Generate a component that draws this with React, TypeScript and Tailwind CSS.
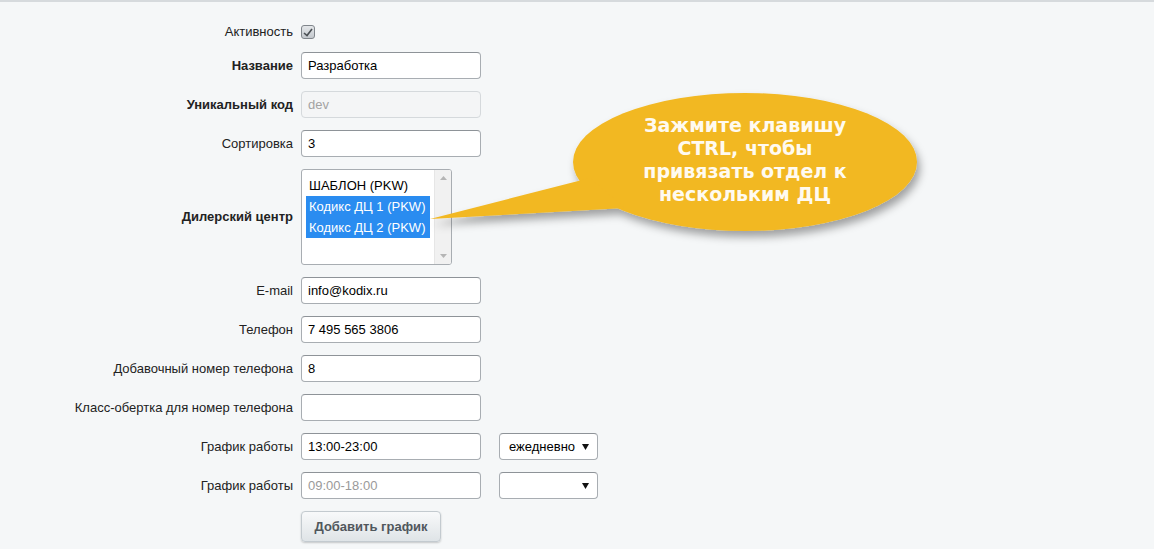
import React from 'react';

const labelCls = 'w-[293px] shrink-0 text-right text-[13px] text-[#222]';
const inputCls =
  'ml-2 h-[27px] w-[180px] rounded-[4px] border border-[#a8adb2] border-t-[#8e9398] bg-white px-[6px] text-[13px] leading-[25px]';

function Row({ label, bold, children }: { label: string; bold?: boolean; children: React.ReactNode }) {
  return (
    <div className="flex items-center">
      <div className={labelCls + (bold ? ' font-bold' : '')}>{label}</div>
      {children}
    </div>
  );
}

function Field({ value, muted }: { value: string; muted?: boolean }) {
  return <div className={inputCls + (muted ? ' text-[#9a9a9a]' : ' text-black')}>{value}</div>;
}

function Dropdown({ value }: { value: string }) {
  return (
    <div className="ml-[18px] flex h-[27px] w-[99px] items-center justify-between rounded-[4px] border border-[#a8adb2] border-t-[#8e9398] bg-white pl-[9px] pr-[8px] text-[13px] text-black">
      <span>{value}</span>
      <svg width="7" height="6" viewBox="0 0 7 6">
        <path d="M0 0 H7 L3.5 6 Z" fill="#111" />
      </svg>
    </div>
  );
}

export default function App() {
  return (
    <div
      className="relative h-[549px] w-full overflow-hidden border-t-2 border-[#d6dadd] bg-[#f5f7f8]"
      style={{ fontFamily: '"Liberation Sans", Arial, sans-serif' }}
    >
      <div className="flex flex-col gap-3 pt-[23px]">
        {/* Активность */}
        <div className="flex h-[14px] items-center">
          <div className={labelCls}>Активность</div>
          <div className="ml-2 flex h-[14px] w-[14px] items-center justify-center rounded-[3px] border border-[#7f858b] bg-gradient-to-b from-[#e4e7ea] to-[#c3c8cd]">
            <svg width="10" height="9" viewBox="0 0 10 9">
              <path d="M1 5 L4 7.5 L9 1" fill="none" stroke="#4a4f54" strokeWidth="1.6" />
            </svg>
          </div>
        </div>

        <div className="mt-px">
          <Row label="Название" bold>
            <Field value="Разработка" />
          </Row>
        </div>

        <Row label="Уникальный код" bold>
          <div className="ml-2 h-[27px] w-[180px] rounded-[4px] border border-[#d5d9dc] bg-[#f4f5f6] px-[6px] text-[13px] leading-[25px] text-[#a3a3a3]">
            dev
          </div>
        </Row>

        <Row label="Сортировка">
          <Field value="3" />
        </Row>

        {/* Дилерский центр */}
        <Row label="Дилерский центр" bold>
          <div className="ml-2 flex h-[96px] w-[151px] overflow-hidden rounded-[3px] border border-[#a8adb2] bg-white">
            <div className="flex-1 pl-[4px] pt-[5px] text-[13px] leading-[21px]">
              <div className="pl-[3px] text-black">ШАБЛОН (PKW)</div>
              <div className="w-[124px] bg-[#2a8cf0] pl-[3px] text-white">Кодикс ДЦ 1 (PKW)</div>
              <div className="w-[124px] bg-[#2a8cf0] pl-[3px] text-white">Кодикс ДЦ 2 (PKW)</div>
            </div>
            <div className="flex w-[17px] flex-col items-center justify-between border-l border-[#e6e6e6] bg-[#f1f1f1] py-[6px]">
              <svg width="7" height="4" viewBox="0 0 7 4">
                <path d="M0 4 L3.5 0 L7 4 Z" fill="#b5b5b5" />
              </svg>
              <svg width="7" height="4" viewBox="0 0 7 4">
                <path d="M0 0 L7 0 L3.5 4 Z" fill="#b5b5b5" />
              </svg>
            </div>
          </div>
        </Row>

        <Row label="E-mail">
          <Field value="info@kodix.ru" />
        </Row>
        <Row label="Телефон">
          <Field value="7 495 565 3806" />
        </Row>
        <Row label="Добавочный номер телефона">
          <Field value="8" />
        </Row>
        <Row label="Класс-обертка для номер телефона">
          <Field value="" />
        </Row>
        <Row label="График работы">
          <Field value="13:00-23:00" />
          <Dropdown value="ежедневно" />
        </Row>
        <Row label="График работы">
          <Field value="09:00-18:00" muted />
          <Dropdown value="" />
        </Row>

        <div className="flex">
          <div className="w-[293px] shrink-0" />
          <button className="ml-2 h-[31px] w-[140px] rounded-[4px] border border-[#c3cacf] bg-gradient-to-b from-[#f8f9fa] to-[#dfe4e7] text-[13px] font-bold text-[#50575c] shadow-[0_1px_2px_rgba(0,0,0,0.2)]">
            Добавить график
          </button>
        </div>
      </div>

      {/* Callout bubble */}
      <svg className="pointer-events-none absolute left-0 top-0" width="1154" height="549" viewBox="0 0 1154 549">
        <defs>
          <filter id="bubbleShadow" x="-20%" y="-20%" width="140%" height="160%">
            <feDropShadow dx="3" dy="6" stdDeviation="4" floodColor="#000" floodOpacity="0.35" />
          </filter>
        </defs>
        <g filter="url(#bubbleShadow)" fill="#f2b823">
          <ellipse cx="745" cy="160" rx="172" ry="69" />
          <path d="M430 217 L590 176 L625 206 Z" />
        </g>
      </svg>
      <div
        className="pointer-events-none absolute left-[572px] top-[112px] w-[346px] text-center text-[19px] font-bold leading-[23px] text-[#fffaf0]"
        style={{ fontFamily: '"DejaVu Sans", Verdana, sans-serif' }}
      >
        Зажмите клавишу
        <br />
        CTRL, чтобы
        <br />
        привязать отдел к
        <br />
        нескольким ДЦ
      </div>
    </div>
  );
}
